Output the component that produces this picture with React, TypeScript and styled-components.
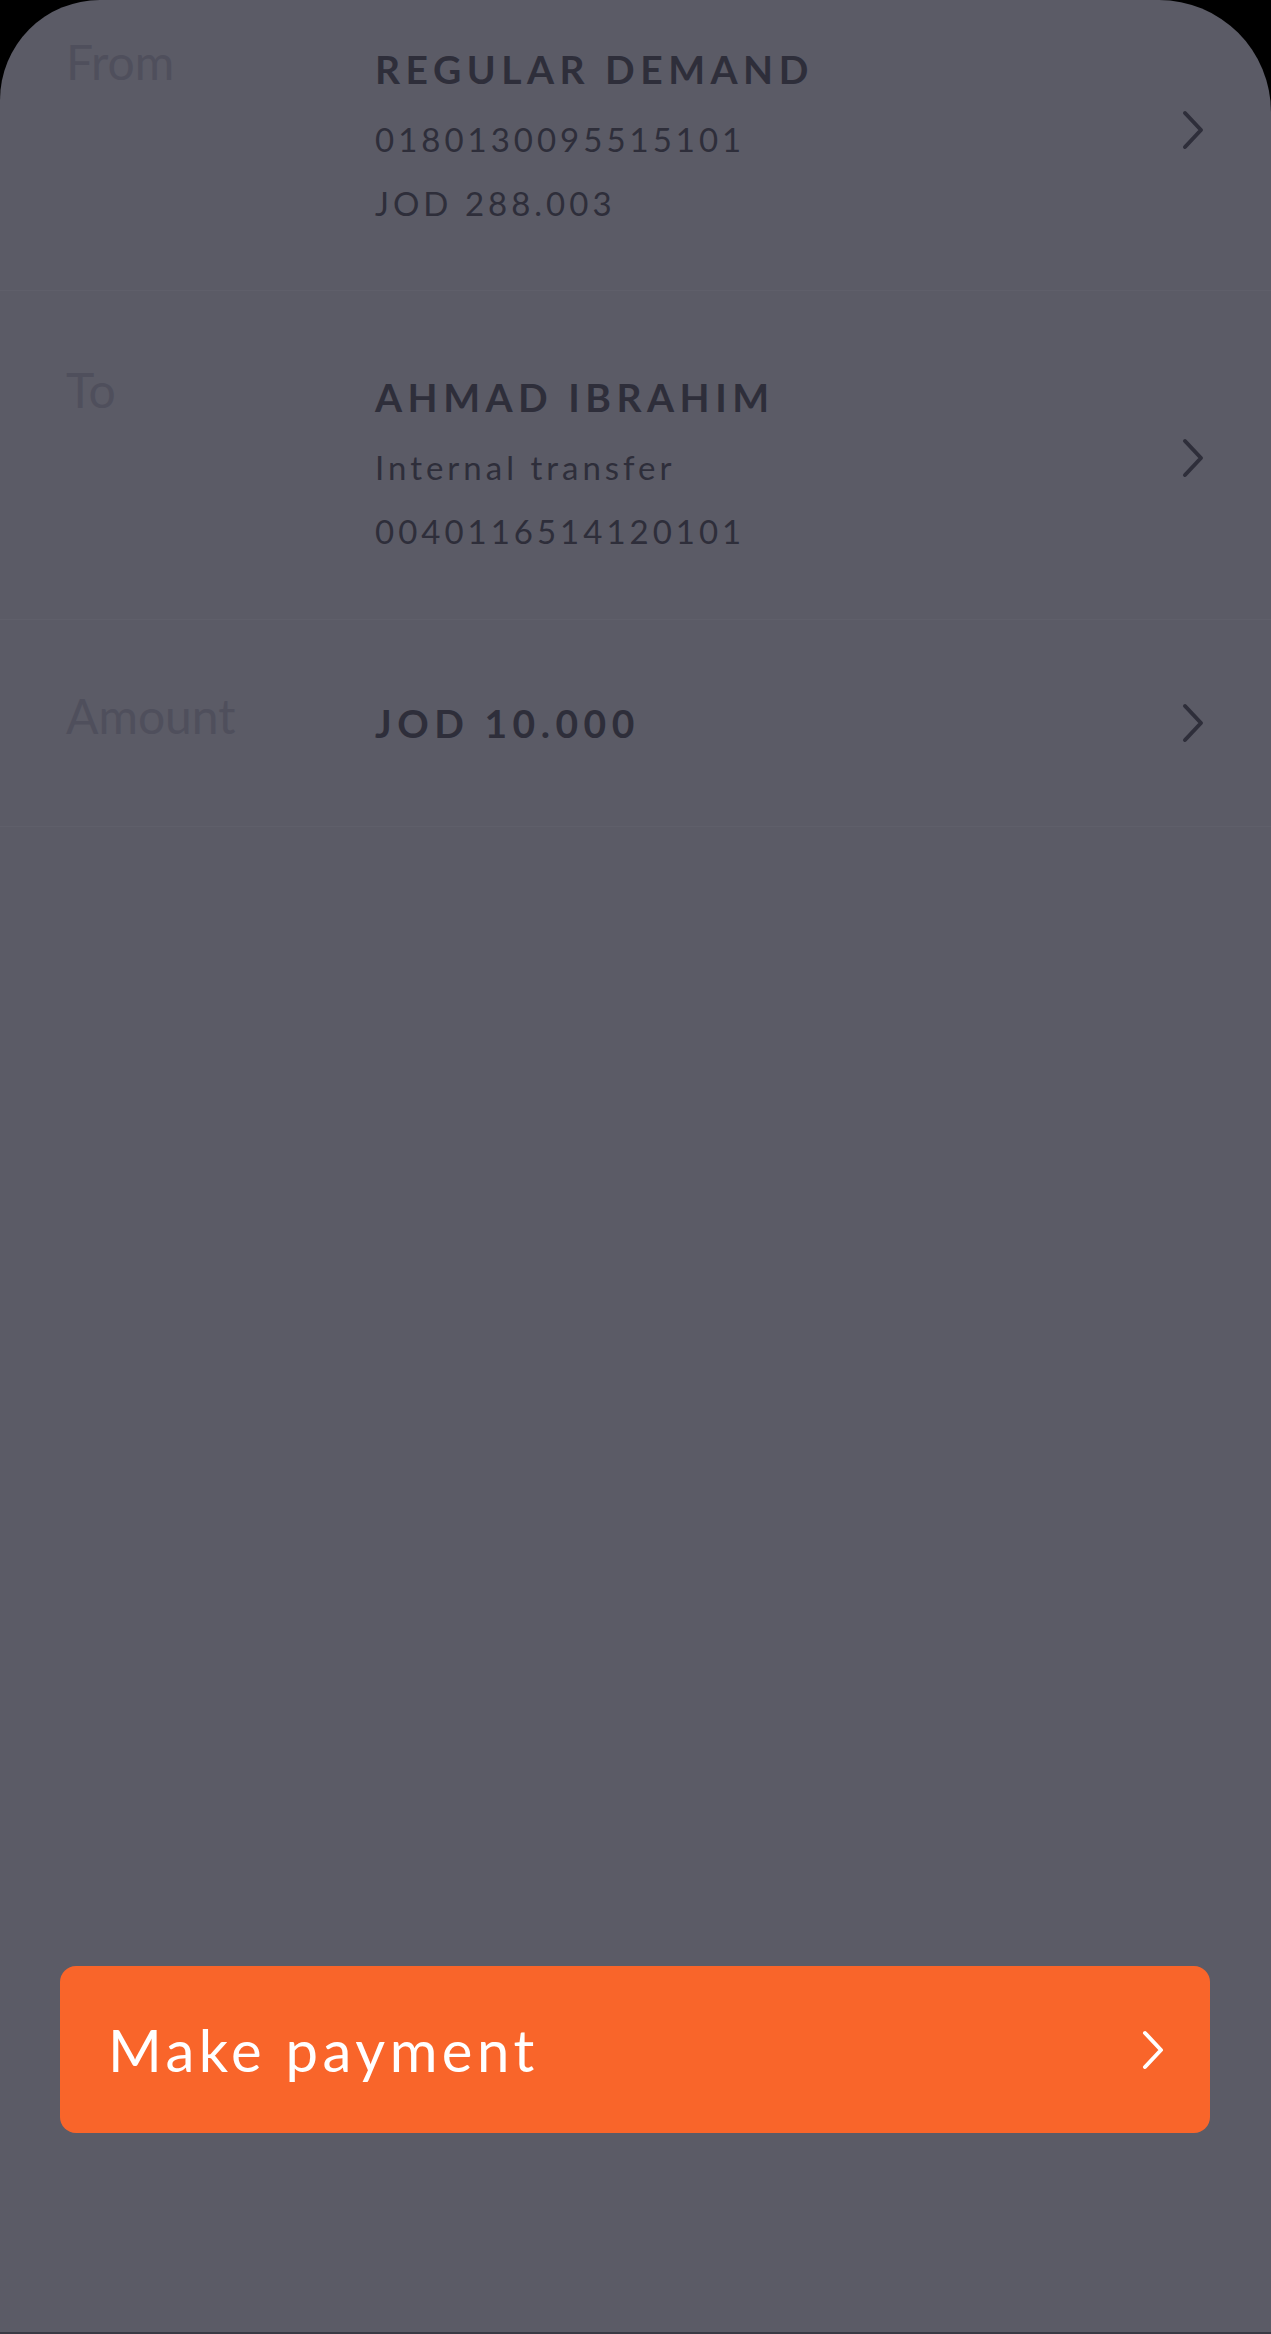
import React from "react";
import styled, { createGlobalStyle } from "styled-components";

const GlobalStyle = createGlobalStyle`
  html, body {
    margin: 0;
    padding: 0;
    background: #000;
  }
  #root {
    min-height: 100vh;
  }
`;

const Screen = styled.div`
  min-height: 100vh;
  box-sizing: border-box;
  display: flex;
  flex-direction: column;
  background: #5b5b66;
  border-radius: 100px 112px 0 0;
  border-bottom: 2px solid #3a3a44;
  overflow: hidden;
  font-family: Lato, "Liberation Sans", sans-serif;
`;

const List = styled.div`
  display: flex;
  flex-direction: column;
`;

const Row = styled.div<{ $pt: number; $pb: number }>`
  display: flex;
  align-items: center;
  padding: ${(p) => p.$pt}px 66px ${(p) => p.$pb}px 66px;
  border-bottom: 1px solid #5f5f6a;
`;

const RowBody = styled.div`
  flex: 1;
  display: flex;
  align-items: flex-start;
`;

const Label = styled.div`
  width: 309px;
  flex-shrink: 0;
  font-size: 48px;
  line-height: 34px;
  font-weight: 400;
  color: #4f4f5c;
`;

const Value = styled.div`
  display: flex;
  flex-direction: column;
`;

const Title = styled.div`
  font-size: 39px;
  line-height: 48px;
  font-weight: 700;
  letter-spacing: 5.5px;
  color: #2e2e3a;
`;

const Subs = styled.div`
  margin-top: 14px;
  display: flex;
  flex-direction: column;
`;

const Sub = styled.div`
  font-size: 33px;
  line-height: 64px;
  font-weight: 400;
  letter-spacing: 4px;
  color: #2e2e3a;
`;

const Chevron = styled.svg<{ $color: string; $lift: number }>`
  flex-shrink: 0;
  display: block;
  width: 24px;
  height: 40px;
  margin-bottom: ${(p) => p.$lift}px;
  fill: none;
  stroke: ${(p) => p.$color};
  stroke-width: 4;
  stroke-linecap: round;
  stroke-linejoin: round;
`;

const Spacer = styled.div`
  flex: 1;
`;

const Footer = styled.div`
  padding: 0 61px 199px 60px;
`;

const PayButton = styled.button`
  width: 100%;
  height: 167px;
  box-sizing: border-box;
  display: flex;
  align-items: center;
  justify-content: space-between;
  padding: 0 45px 0 48px;
  border: none;
  border-radius: 16px;
  background: #f9652a;
  color: #fff;
  font-family: Lato, "Liberation Sans", sans-serif;
  font-size: 58px;
  font-weight: 400;
  letter-spacing: 4.5px;
  cursor: pointer;
`;

const Arrow = ({ color, lift = 0 }: { color: string; lift?: number }) => (
  <Chevron $color={color} $lift={lift} viewBox="0 0 24 40">
    <polyline points="4,3 20,20 4,37" />
  </Chevron>
);

type Item = {
  label: string;
  title: string;
  subs: string[];
  pt: number;
  pb: number;
};

const items: Item[] = [
  {
    label: "From",
    title: "REGULAR DEMAND",
    subs: ["0180130095515101", "JOD 288.003"],
    pt: 45,
    pb: 55,
  },
  {
    label: "To",
    title: "AHMAD IBRAHIM",
    subs: ["Internal transfer", "0040116514120101"],
    pt: 82,
    pb: 56,
  },
  {
    label: "Amount",
    title: "JOD 10.000",
    subs: [],
    pt: 79,
    pb: 79,
  },
];

export default function App() {
  return (
    <>
      <GlobalStyle />
      <Screen>
        <List>
          {items.map((it) => (
            <Row key={it.label} $pt={it.pt} $pb={it.pb}>
              <RowBody>
                <Label>{it.label}</Label>
                <Value>
                  <Title>{it.title}</Title>
                  {it.subs.length > 0 && (
                    <Subs>
                      {it.subs.map((s) => (
                        <Sub key={s}>{s}</Sub>
                      ))}
                    </Subs>
                  )}
                </Value>
              </RowBody>
              <Arrow color="#2e2e3a" lift={it.subs.length > 0 ? 20 : 0} />
            </Row>
          ))}
        </List>
        <Spacer />
        <Footer>
          <PayButton>
            <span>Make payment</span>
            <Arrow color="#ffffff" />
          </PayButton>
        </Footer>
      </Screen>
    </>
  );
}
